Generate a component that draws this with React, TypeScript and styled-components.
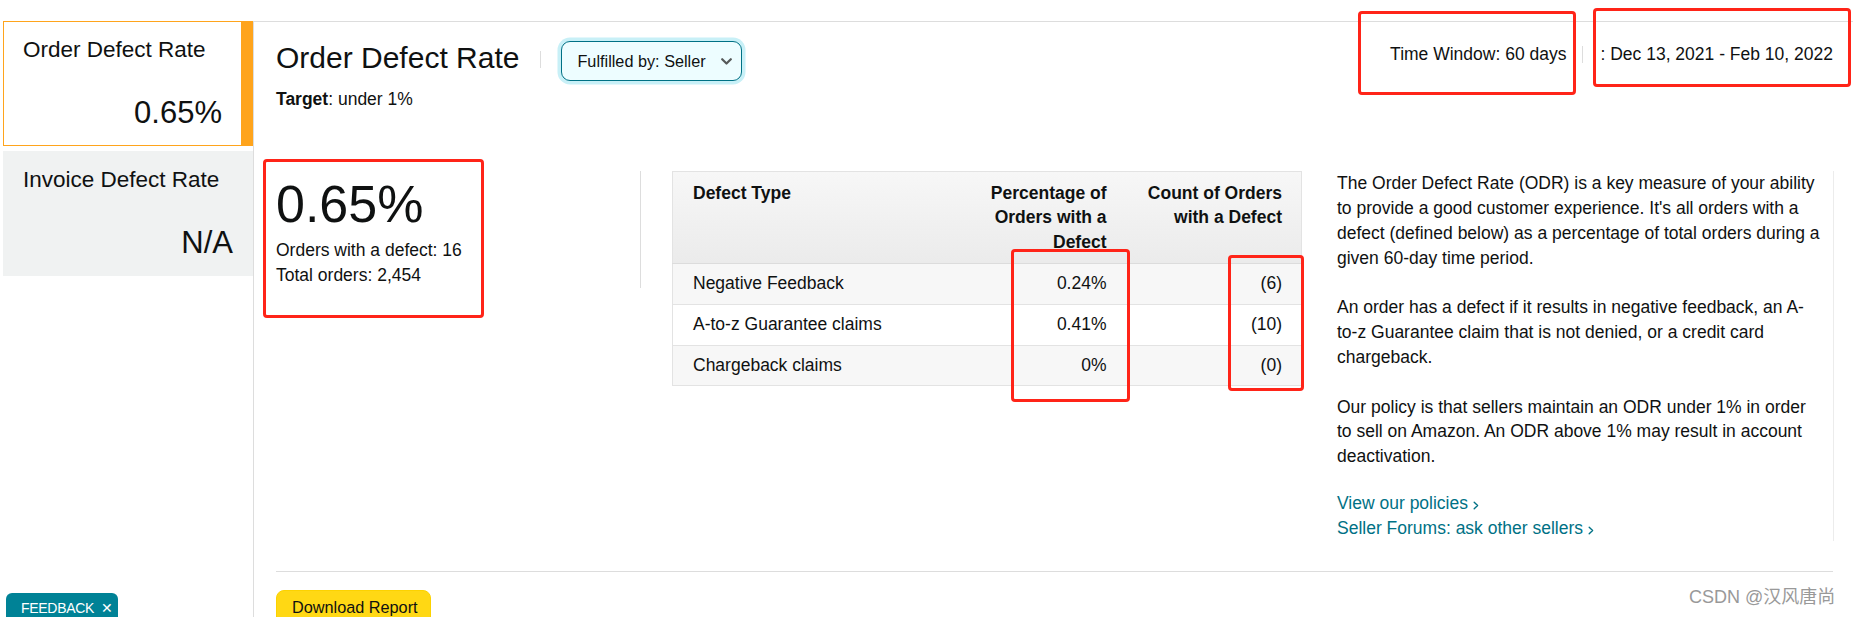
import React from "react";
import styled, { createGlobalStyle } from "styled-components";

const GlobalStyle = createGlobalStyle`
  html, body { margin: 0; padding: 0; overflow: hidden; background: #fff; }
  body { font-family: "Liberation Sans", Arial, sans-serif; color: #0f1111; }
  * { box-sizing: border-box; }
`;

const Page = styled.div`
  position: relative;
  display: flex;
  min-height: 100vh;
  padding: 21px 0 0 3px;
  font-size: 17.5px;
  line-height: 25px;
`;

const Sidebar = styled.nav`
  width: 250px;
  flex-shrink: 0;
  display: flex;
  flex-direction: column;
  gap: 5px;
`;

const MetricCard = styled.div<{ $active?: boolean }>`
  height: 125px;
  display: flex;
  flex-direction: column;
  justify-content: space-between;
  padding: 13px 19px 14px;
  background: ${(p) => (p.$active ? "#fff" : "#f0f2f2")};
  border: 1px solid ${(p) => (p.$active ? "#ffa41c" : "#f0f2f2")};
  border-right: ${(p) => (p.$active ? "12px solid #ffa41c" : "1px solid #f0f2f2")};
`;

const MetricName = styled.div`
  font-size: 22.5px;
  line-height: 30px;
`;

const MetricValue = styled.div`
  font-size: 31px;
  line-height: 36px;
  text-align: right;
`;

const Main = styled.main`
  flex: 1;
  min-width: 0;
  border-left: 1px solid #dddddd;
  border-top: 1px solid #dddddd;
  padding: 18px 20px 0 22px;
`;

const Header = styled.header`
  display: flex;
  justify-content: space-between;
  align-items: flex-start;
`;

const TitleRow = styled.div`
  display: flex;
  align-items: flex-start;
`;

const Title = styled.h1`
  margin: 0;
  font-size: 30px;
  line-height: 36px;
  font-weight: 400;
`;

const Divider = styled.span<{ $ml: number; $mr: number; $mt: number }>`
  display: block;
  width: 1px;
  height: 17px;
  background: #dddddd;
  margin: ${(p) => `${p.$mt}px ${p.$mr}px 0 ${p.$ml}px`};
`;

const Dropdown = styled.button`
  margin-top: 1px;
  height: 40px;
  display: flex;
  align-items: center;
  gap: 15px;
  padding: 0 9.5px 0 15px;
  background: #edfdff;
  border: 1px solid #007185;
  border-radius: 9px;
  box-shadow: 0 0 0 3.5px #c8f0f7;
  font-family: inherit;
  font-size: 16.25px;
  color: #0f1111;
  cursor: pointer;
`;

const Target = styled.div`
  margin-top: 6px;
  font-size: 17.5px;
  line-height: 25px;
  b { font-weight: 700; }
`;

const TimeGroup = styled.div`
  margin-top: 2px;
  display: flex;
  align-items: center;
  white-space: nowrap;
`;

const Body = styled.section`
  margin-top: 59px;
  display: grid;
  grid-template-columns: 365px 1fr 497px;
  align-items: start;
`;

const Stat = styled.div`
  border-right: 1px solid #dddddd;
`;

const BigNumber = styled.div`
  font-size: 52px;
  line-height: 66px;
`;

const StatLine = styled.div<{ $first?: boolean }>`
  margin-top: ${(p) => (p.$first ? "1.4px" : "0")};
  line-height: 25px;
`;

const TableArea = styled.div`
  padding: 0 35px 0 31px;
`;

const Table = styled.table`
  width: 100%;
  border-collapse: collapse;
  table-layout: fixed;
  border: 1px solid #e3e3e3;
  font-size: 17.5px;
`;

const Col = styled.col<{ $w: number }>`
  width: ${(p) => p.$w}px;
`;

const HeadRow = styled.tr`
  background: linear-gradient(to bottom, #f7f7f7, #ebebeb);
  border-bottom: 1px solid #dcdcdc;
`;

const Th = styled.th<{ $right?: boolean }>`
  padding: 8.5px 19px 8.5px 20px;
  line-height: 24.7px;
  font-weight: 700;
  vertical-align: top;
  text-align: ${(p) => (p.$right ? "right" : "left")};
`;

const Row = styled.tr<{ $shade?: boolean }>`
  background: ${(p) => (p.$shade ? "#f7f7f7" : "#ffffff")};
  border-bottom: 1px solid #e3e3e3;
`;

const Td = styled.td<{ $right?: boolean }>`
  padding: 7px 19px 8px 20px;
  line-height: 24.7px;
  text-align: ${(p) => (p.$right ? "right" : "left")};
  white-space: nowrap;
`;

const Info = styled.div`
  border-right: 1px solid #ececec;
  line-height: 24.85px;
`;

const Para = styled.p`
  margin: 0 0 24.85px;
  &:last-of-type { margin-bottom: 0; }
`;

const Links = styled.div`
  margin-top: 22px;
  display: flex;
  flex-direction: column;
`;

const Link = styled.a`
  color: #007185;
  text-decoration: none;
  display: inline-flex;
  align-items: baseline;
  svg { margin-left: 5px; align-self: flex-end; margin-bottom: 6px; }
`;

const Footer = styled.footer`
  margin-top: 30px;
  border-top: 1px solid #dddddd;
  padding-top: 18px;
`;

const DownloadButton = styled.button`
  height: 36px;
  padding: 0 12px 0 15px;
  background: #ffd814;
  border: 1px solid #fcd200;
  border-radius: 8px;
  font-family: inherit;
  font-size: 16.25px;
  color: #0f1111;
  cursor: pointer;
`;

const FeedbackTab = styled.div`
  position: absolute;
  left: 6px;
  top: 593px;
  width: 112px;
  height: 40px;
  background: #008296;
  border-radius: 6px 6px 0 0;
  color: #fff;
  display: flex;
  align-items: flex-start;
  padding: 6px 0 0 15px;
  gap: 7px;
  font-size: 14px;
  line-height: 18px;
  letter-spacing: -0.3px;
`;

const Annotation = styled.div<{ $x: number; $y: number; $w: number; $h: number }>`
  position: absolute;
  left: ${(p) => p.$x}px;
  top: ${(p) => p.$y}px;
  width: ${(p) => p.$w}px;
  height: ${(p) => p.$h}px;
  border: 3px solid #ff2418;
  border-radius: 4px;
  pointer-events: none;
`;

const Watermark = styled.div`
  position: absolute;
  left: 1689px;
  top: 585px;
  font-family: "Liberation Sans", "Noto Sans CJK SC", sans-serif;
  font-size: 18px;
  line-height: 24px;
  color: #999999;
  text-shadow: 0 0 1px #ffffff;
  white-space: nowrap;
`;

const ChevronDown = () => (
  <svg width="11" height="7" viewBox="0 0 11 7" fill="none">
    <path d="M1.2 1.2 L5.5 5.5 L9.8 1.2" stroke="#565959" strokeWidth="2.2" strokeLinecap="round" strokeLinejoin="round" />
  </svg>
);

const ChevronRight = () => (
  <svg width="6" height="9" viewBox="0 0 6 9" fill="none">
    <path d="M1.2 1.2 L4.6 4.5 L1.2 7.8" stroke="#007185" strokeWidth="1.4" strokeLinecap="round" strokeLinejoin="round" />
  </svg>
);

const rows = [
  { type: "Negative Feedback", pct: "0.24%", count: "(6)" },
  { type: "A-to-z Guarantee claims", pct: "0.41%", count: "(10)" },
  { type: "Chargeback claims", pct: "0%", count: "(0)" },
];

export default function App() {
  return (
    <>
      <GlobalStyle />
      <Page>
        <Sidebar>
          <MetricCard $active>
            <MetricName>Order Defect Rate</MetricName>
            <MetricValue>0.65%</MetricValue>
          </MetricCard>
          <MetricCard>
            <MetricName>Invoice Defect Rate</MetricName>
            <MetricValue>N/A</MetricValue>
          </MetricCard>
        </Sidebar>

        <Main>
          <Header>
            <div>
              <TitleRow>
                <Title>Order Defect Rate</Title>
                <Divider $ml={21} $mr={20} $mt={11} />
                <Dropdown>
                  <span>Fulfilled by: Seller</span>
                  <ChevronDown />
                </Dropdown>
              </TitleRow>
              <Target>
                <b>Target</b>: under 1%
              </Target>
            </div>
            <TimeGroup>
              <span>Time Window: 60 days</span>
              <Divider $ml={16} $mr={17} $mt={0} />
              <span>: Dec 13, 2021 - Feb 10, 2022</span>
            </TimeGroup>
          </Header>

          <Body>
            <Stat>
              <BigNumber>0.65%</BigNumber>
              <StatLine $first>Orders with a defect: 16</StatLine>
              <StatLine>Total orders: 2,454</StatLine>
            </Stat>

            <TableArea>
              <Table>
                <colgroup>
                  <Col $w={294} />
                  <Col $w={159} />
                  <Col $w={176} />
                </colgroup>
                <thead>
                  <HeadRow>
                    <Th>Defect Type</Th>
                    <Th $right>Percentage of Orders with a Defect</Th>
                    <Th $right>Count of Orders with a Defect</Th>
                  </HeadRow>
                </thead>
                <tbody>
                  {rows.map((r, i) => (
                    <Row key={r.type} $shade={i !== 1}>
                      <Td>{r.type}</Td>
                      <Td $right>{r.pct}</Td>
                      <Td $right>{r.count}</Td>
                    </Row>
                  ))}
                </tbody>
              </Table>
            </TableArea>

            <Info>
              <Para>
                The Order Defect Rate (ODR) is a key measure of your ability
                <br />
                to provide a good customer experience. It's all orders with a
                <br />
                defect (defined below) as a percentage of total orders during a
                <br />
                given 60-day time period.
              </Para>
              <Para>
                An order has a defect if it results in negative feedback, an A-
                <br />
                to-z Guarantee claim that is not denied, or a credit card
                <br />
                chargeback.
              </Para>
              <Para>
                Our policy is that sellers maintain an ODR under 1% in order
                <br />
                to sell on Amazon. An ODR above 1% may result in account
                <br />
                deactivation.
              </Para>
              <Links>
                <div>
                  <Link href="#">
                    View our policies
                    <ChevronRight />
                  </Link>
                </div>
                <div>
                  <Link href="#">
                    Seller Forums: ask other sellers
                    <ChevronRight />
                  </Link>
                </div>
              </Links>
            </Info>
          </Body>

          <Footer>
            <DownloadButton>Download Report</DownloadButton>
          </Footer>
        </Main>

        <FeedbackTab>
          <span>FEEDBACK</span>
          <span>✕</span>
        </FeedbackTab>

        <Annotation $x={1358} $y={11} $w={218} $h={84} />
        <Annotation $x={1593} $y={8} $w={258} $h={79} />
        <Annotation $x={263} $y={159} $w={221} $h={159} />
        <Annotation $x={1011} $y={249} $w={119} $h={153} />
        <Annotation $x={1228} $y={255} $w={76} $h={136} />

        <Watermark>CSDN @汉风唐尚</Watermark>
      </Page>
    </>
  );
}
